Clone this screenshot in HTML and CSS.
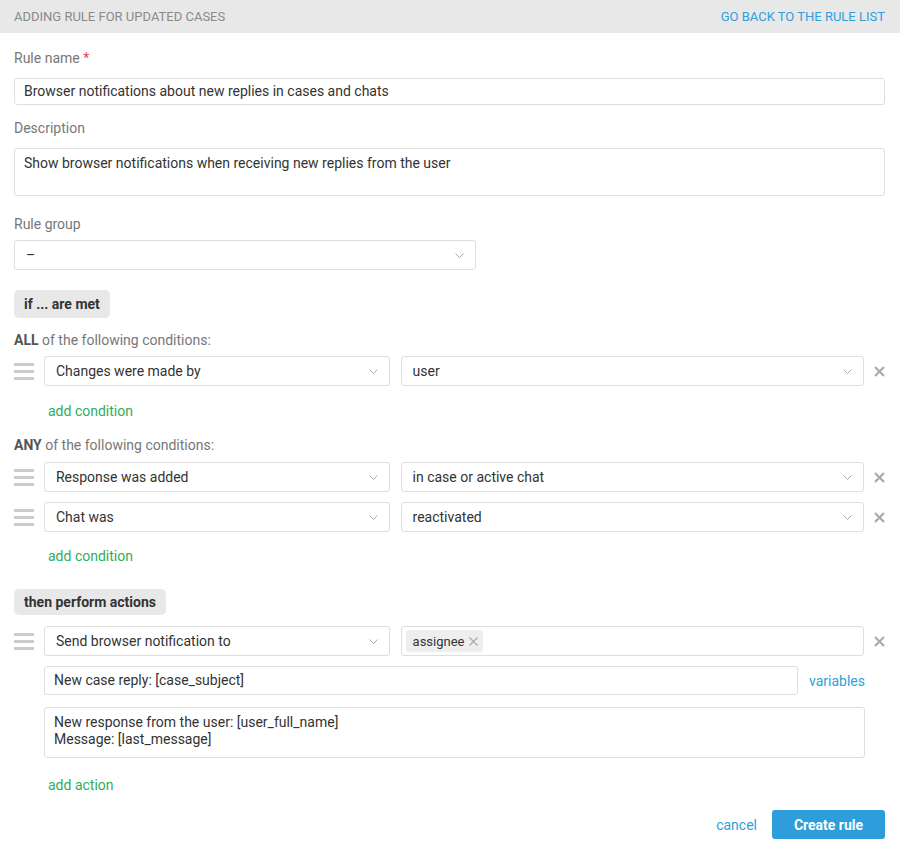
FILE: index.html
```html
<!DOCTYPE html>
<html>
<head>
<meta charset="utf-8">
<link rel="stylesheet" href="styles.css">
</head>
<body>
<div class="header">
  <span class="title">ADDING RULE FOR UPDATED CASES</span>
  <a class="back">GO BACK TO THE RULE LIST</a>
</div>
<div class="content">
  <div class="label l-first">Rule name <span class="req">*</span></div>
  <div class="input">Browser notifications about new replies in cases and chats</div>

  <div class="label l-desc">Description</div>
  <div class="textarea">Show browser notifications when receiving new replies from the user</div>

  <div class="label l-group">Rule group</div>
  <div class="select group-select"><span>–</span><svg class="chev" width="9" height="5" viewBox="0 0 9 5"><path d="M0.5 0.5 L4.5 4.5 L8.5 0.5" fill="none" stroke="#aaa" stroke-width="1"/></svg></div>

  <div class="badge b-if">if ... are met</div>

  <div class="cond-label l-all"><b>ALL</b> of the following conditions:</div>
  <div class="row r-all">
    <div class="handle"><i></i><i></i><i></i></div>
    <div class="select s1"><span>Changes were made by</span><svg class="chev" width="9" height="5" viewBox="0 0 9 5"><path d="M0.5 0.5 L4.5 4.5 L8.5 0.5" fill="none" stroke="#aaa" stroke-width="1"/></svg></div>
    <div class="select s2"><span>user</span><svg class="chev" width="9" height="5" viewBox="0 0 9 5"><path d="M0.5 0.5 L4.5 4.5 L8.5 0.5" fill="none" stroke="#aaa" stroke-width="1"/></svg></div>
    <svg class="del" width="11" height="11" viewBox="0 0 11 11"><path d="M1 1 L10 10 M10 1 L1 10" stroke="#aaa" stroke-width="2.2"/></svg>
  </div>
  <a class="add a-cond1">add condition</a>

  <div class="cond-label l-any"><b>ANY</b> of the following conditions:</div>
  <div class="row r-any1">
    <div class="handle"><i></i><i></i><i></i></div>
    <div class="select s1"><span>Response was added</span><svg class="chev" width="9" height="5" viewBox="0 0 9 5"><path d="M0.5 0.5 L4.5 4.5 L8.5 0.5" fill="none" stroke="#aaa" stroke-width="1"/></svg></div>
    <div class="select s2"><span>in case or active chat</span><svg class="chev" width="9" height="5" viewBox="0 0 9 5"><path d="M0.5 0.5 L4.5 4.5 L8.5 0.5" fill="none" stroke="#aaa" stroke-width="1"/></svg></div>
    <svg class="del" width="11" height="11" viewBox="0 0 11 11"><path d="M1 1 L10 10 M10 1 L1 10" stroke="#aaa" stroke-width="2.2"/></svg>
  </div>
  <div class="row r-any2">
    <div class="handle"><i></i><i></i><i></i></div>
    <div class="select s1"><span>Chat was</span><svg class="chev" width="9" height="5" viewBox="0 0 9 5"><path d="M0.5 0.5 L4.5 4.5 L8.5 0.5" fill="none" stroke="#aaa" stroke-width="1"/></svg></div>
    <div class="select s2"><span>reactivated</span><svg class="chev" width="9" height="5" viewBox="0 0 9 5"><path d="M0.5 0.5 L4.5 4.5 L8.5 0.5" fill="none" stroke="#aaa" stroke-width="1"/></svg></div>
    <svg class="del" width="11" height="11" viewBox="0 0 11 11"><path d="M1 1 L10 10 M10 1 L1 10" stroke="#aaa" stroke-width="2.2"/></svg>
  </div>
  <a class="add a-cond2">add condition</a>

  <div class="badge b-then">then perform actions</div>
  <div class="row r-act">
    <div class="handle"><i></i><i></i><i></i></div>
    <div class="select s1"><span>Send browser notification to</span><svg class="chev" width="9" height="5" viewBox="0 0 9 5"><path d="M0.5 0.5 L4.5 4.5 L8.5 0.5" fill="none" stroke="#aaa" stroke-width="1"/></svg></div>
    <div class="tags s2"><span class="tag">assignee<svg width="9" height="9" viewBox="0 0 9 9"><path d="M0.5 0.5 L8.5 8.5 M8.5 0.5 L0.5 8.5" stroke="#aaa" stroke-width="1.2"/></svg></span></div>
    <svg class="del" width="11" height="11" viewBox="0 0 11 11"><path d="M1 1 L10 10 M10 1 L1 10" stroke="#aaa" stroke-width="2.2"/></svg>
  </div>
  <div class="subject-row">
    <div class="input subject">New case reply: [case_subject]</div>
    <a class="vars">variables</a>
  </div>
  <div class="textarea message">New response from the user: [user_full_name]<br>Message: [last_message]</div>
  <a class="add a-act">add action</a>

  <div class="footer">
    <a class="cancel">cancel</a>
    <button class="create">Create rule</button>
  </div>
</div>
</body>
</html>
```

FILE: styles.css
```css
* { box-sizing: border-box; }
body {
  margin: 0;
  background: #fff;
  font-family: Roboto, "Liberation Sans", sans-serif;
  font-size: 14px;
  color: #333;
}
a { cursor: pointer; }
.header {
  height: 33px;
  background: #e8e8e8;
  display: flex;
  align-items: center;
  justify-content: space-between;
  padding: 0 15px 0 14px;
  font-size: 13px;
}
.title { color: #8a8a8a; }
.back { color: #2f9fdc; }
.content {
  padding: 0 15px 0 14px;
  display: flex;
  flex-direction: column;
}
.label {
  color: #777;
  line-height: 20px;
  height: 20px;
}
.req { color: #e0474c; }
.l-first { margin-top: 15px; margin-bottom: 10px; }
.l-desc { margin-top: 13px; margin-bottom: 10px; }
.l-group { margin-top: 18px; margin-bottom: 6px; }
.input {
  height: 27px;
  border: 1px solid #dedede;
  border-radius: 3px;
  padding: 0 9px;
  line-height: 25px;
  color: #333;
}
.textarea {
  height: 48px;
  border: 1px solid #dedede;
  border-radius: 3px;
  padding: 6px 9px;
  line-height: 17px;
}
.select {
  height: 30px;
  border: 1px solid #dedede;
  border-radius: 3px;
  padding: 0 11px 0 11px;
  display: flex;
  align-items: center;
  justify-content: space-between;
}
.chev { flex: none; }
.group-select { width: 462px; }
.badge {
  align-self: flex-start;
  background: #e8e8e8;
  border-radius: 5px;
  font-weight: 700;
  color: #333;
  padding: 0 10px;
}
.b-if { margin-top: 20px; height: 28px; line-height: 28px; }
.b-then { margin-top: 23px; height: 26px; line-height: 26px; }
.cond-label {
  color: #777;
  line-height: 20px;
  height: 20px;
}
.cond-label b { color: #555; }
.l-all { margin-top: 12px; }
.l-any { margin-top: 14px; }
.row {
  display: flex;
  align-items: center;
  height: 30px;
}
.r-all { margin-top: 6px; }
.r-any1 { margin-top: 7px; }
.r-any2 { margin-top: 10px; }
.r-act { margin-top: 11px; }
.handle {
  width: 20px;
  margin-right: 10px;
  display: flex;
  flex-direction: column;
  gap: 4px;
}
.handle i {
  display: block;
  height: 3px;
  background: #ccc;
}
.s1 { width: 346px; }
.s2 { width: 464px; margin-left: 11px; }
.del { margin-left: 10px; flex: none; }
.tags {
  height: 30px;
  border: 1px solid #dedede;
  border-radius: 3px;
  padding: 0 4px;
  display: flex;
  align-items: center;
}
.tag {
  background: #eee;
  border-radius: 3px;
  height: 22px;
  padding: 0 5px 0 7px;
  display: flex;
  align-items: center;
  gap: 5px;
  font-size: 13px;
  color: #333;
}
.add {
  color: #2eae5c;
  margin-left: 34px;
  line-height: 20px;
  height: 20px;
  align-self: flex-start;
}
.a-cond1 { margin-top: 15px; }
.a-cond2 { margin-top: 14px; }
.a-act { margin-top: 17px; }
.subject-row {
  margin-top: 10px;
  margin-left: 30px;
  display: flex;
  align-items: center;
}
.subject { width: 754px; height: 29px; line-height: 27px; }
.vars { color: #2f9fdc; margin-left: 11px; }
.message {
  margin-top: 12px;
  margin-left: 30px;
  width: 821px;
  height: 51px;
  padding-top: 6px;
}
.footer {
  margin-top: 15px;
  display: flex;
  justify-content: flex-end;
  align-items: center;
}
.cancel { color: #2f9fdc; margin-right: 15px; }
.create {
  height: 29px;
  width: 113px;
  border: none;
  border-radius: 3px;
  background: #2d9ddc;
  color: #fff;
  font-family: inherit;
  font-size: 14px;
  font-weight: 700;
}
```
